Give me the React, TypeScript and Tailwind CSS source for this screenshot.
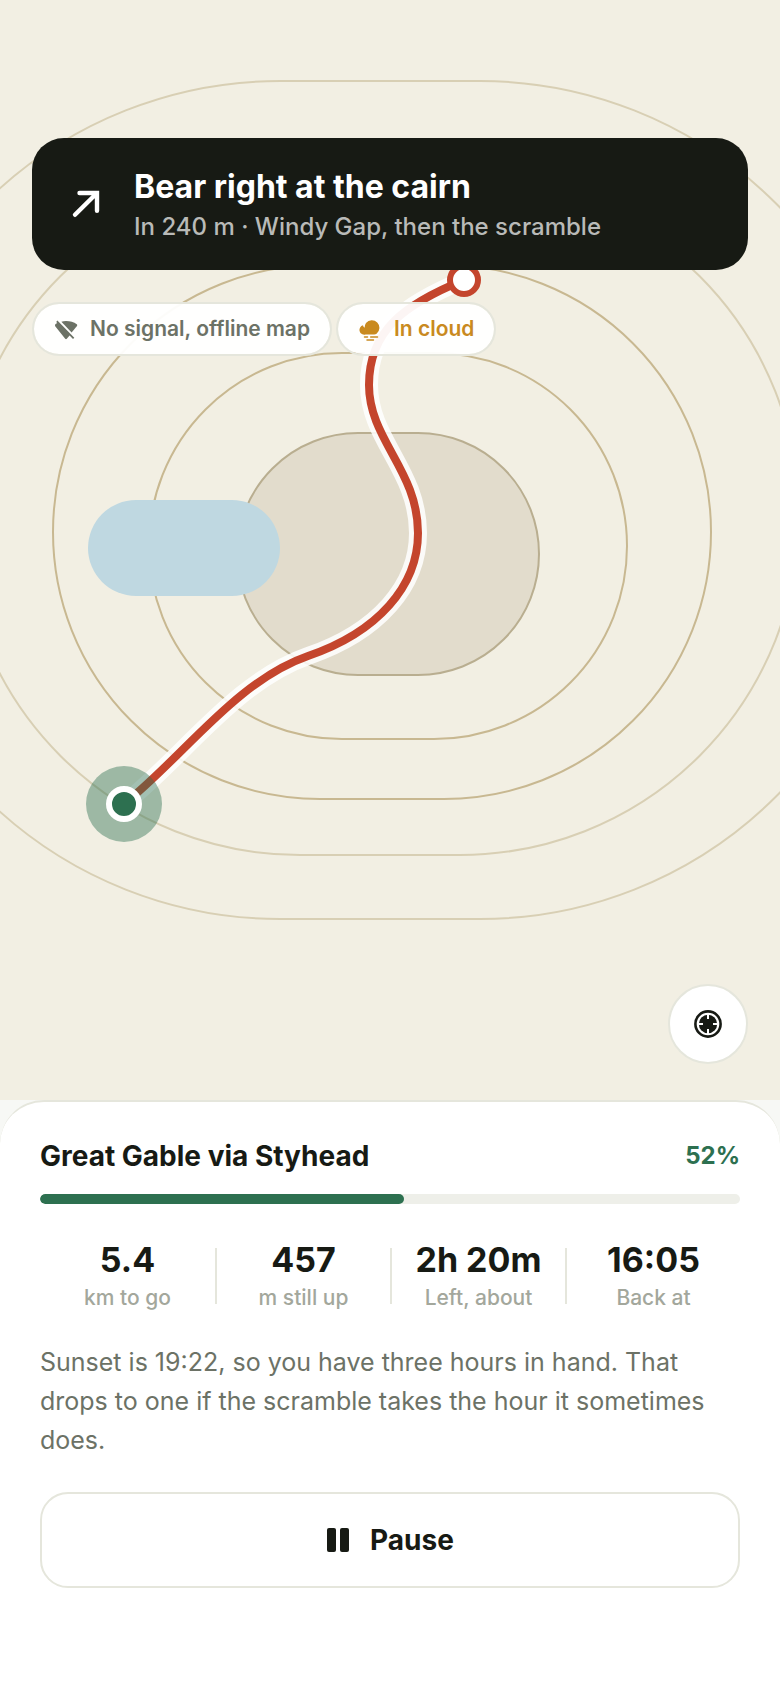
import { useState } from 'react';

type Stat = {
  value: string;
  label: string;
};

const walk = {
  title: 'Great Gable via Styhead',
  progress: 52,
  note: 'Sunset is 19:22, so you have three hours in hand. That drops to one if the scramble takes the hour it sometimes does.',
};

const stats: Stat[] = [
  { value: '5.4', label: 'km to go' },
  { value: '457', label: 'm still up' },
  { value: '2h 20m', label: 'Left, about' },
  { value: '16:05', label: 'Back at' },
];

const contours = [
  { x: -139, y: 81, width: 1038, height: 838, rx: 419, stroke: '#d8cfb4' },
  { x: -39, y: 177, width: 838, height: 678, rx: 339, stroke: '#d8cfb4' },
  { x: 53, y: 265, width: 658, height: 534, rx: 267, stroke: '#c8b891' },
  { x: 149, y: 353, width: 478, height: 386, rx: 193, stroke: '#c8b891' },
];

const route =
  'M124 804C184 756 236 681 308 656C378 632 418 586 418 533C418 470 369 440 369 385C369 330 405 304 464 280';

function TrailMap() {
  return (
    <svg
      className="absolute inset-0 h-full w-full"
      viewBox="0 0 780 1100"
      preserveAspectRatio="xMidYMid slice"
      fill="none"
      role="img"
      aria-label="Map of the route"
    >
      {contours.map((contour) => (
        <rect key={contour.x} strokeWidth="2" {...contour} />
      ))}
      <rect
        x="237"
        y="433"
        width="302"
        height="242"
        rx="121"
        fill="#e2dccc"
        stroke="#b9ae90"
        strokeWidth="2"
      />
      <rect x="88" y="500" width="192" height="96" rx="48" fill="#bfd8e1" />
      <path d={route} stroke="#fff" strokeOpacity="0.85" strokeWidth="18" strokeLinecap="round" />
      <path d={route} stroke="#c4452d" strokeWidth="8" strokeLinecap="round" />
      <circle cx="464" cy="280" r="14" fill="#fff" stroke="#c4452d" strokeWidth="6" />
      <circle cx="124" cy="804" r="38" fill="#2d7050" fillOpacity="0.43" />
      <circle cx="124" cy="804" r="15" fill="#2d7050" stroke="#fff" strokeWidth="6" />
    </svg>
  );
}

function BearRightIcon() {
  return (
    <svg className="size-11 shrink-0" viewBox="0 0 44 44" fill="none" aria-hidden="true">
      <path
        d="M11 32.800L32.500 11.500M15.500 11H33V28.800"
        stroke="#fff"
        strokeWidth="4.400"
        strokeLinecap="round"
        strokeLinejoin="miter"
      />
    </svg>
  );
}

function NoSignalIcon() {
  return (
    <svg className="size-6 shrink-0" viewBox="0 0 24 24" fill="currentColor" aria-hidden="true">
      <path d="M3.400 3.600L20.300 20.800L19 22L15.600 18.600L12.800 21.800Q12 22.600 11.200 21.800L1.200 9.200Q.500 8 1.600 7L3.200 6L2.200 4.900Z" />
      <path d="M7.400 4.700Q9.400 4 12 4Q18.200 4 22.800 7.300Q23.600 8 23 9L17.600 15.500Z" />
    </svg>
  );
}

function CloudIcon() {
  return (
    <svg className="size-6 shrink-0" viewBox="0 0 24 24" fill="currentColor" aria-hidden="true">
      <path d="M7.500 17.500A4.600 4.600 0 0 1 5 8.300Q5.200 9.800 6.600 10.800Q6.600 8 8 6A7.600 7.600 0 1 1 18.600 16.800Q17.600 17.500 16.200 17.500Z" />
      <path
        d="M6.500 20H9.500M12.700 20H19.500M9 23H15.500"
        stroke="currentColor"
        strokeWidth="1.500"
        strokeLinecap="round"
      />
    </svg>
  );
}

function CompassIcon() {
  return (
    <svg className="size-7" viewBox="0 0 28 28" fill="none" aria-hidden="true">
      <circle cx="14" cy="14" r="12.600" stroke="#171a14" strokeWidth="2.600" />
      <circle cx="14" cy="14" r="9.200" fill="#171a14" />
      <path
        d="M14 4V9M14 19V24M4 14H9M19 14H24"
        stroke="#fff"
        strokeWidth="2"
      />
    </svg>
  );
}

export default function App() {
  const [paused, setPaused] = useState(false);

  return (
    <main className="flex min-h-screen flex-col bg-[#f7f8f5] font-['Inter',sans-serif] text-[#171a14]">
      <section className="relative flex min-h-[1000px] flex-1 flex-col overflow-hidden bg-[#f2efe3] px-8 pt-[138px] pb-9">
        <TrailMap />

        <div className="relative flex min-h-[132px] items-center gap-[26px] rounded-[32px] bg-[#171a14] px-8">
          <BearRightIcon />
          <div className="pt-0.5">
            <h1 className="text-[32px] leading-10 font-bold text-white">Bear right at the cairn</h1>
            <p className="mt-1 text-2xl leading-8 font-medium text-[#b9bab8]">
              In 240 m · Windy Gap, then the scramble
            </p>
          </div>
        </div>

        <div className="relative mt-8 flex flex-wrap gap-1">
          <span className="flex h-[54px] items-center gap-3 rounded-full border-2 border-[#e5e6dc] bg-white/95 bg-clip-padding px-5 text-[21px] font-semibold text-[#6c7266]">
            <NoSignalIcon />
            No signal, offline map
          </span>
          <span className="flex h-[54px] items-center gap-3 rounded-full border-2 border-[#e5e6dc] bg-white/95 bg-clip-padding px-5 text-[21px] font-semibold text-[#c98a1f]">
            <CloudIcon />
            In cloud
          </span>
        </div>

        <button
          className="relative mt-auto flex size-20 items-center justify-center self-end rounded-full border-2 border-[#e5e6dc] bg-white"
          type="button"
          aria-label="Recentre map"
        >
          <CompassIcon />
        </button>
      </section>

      <section className="rounded-t-[44px] border-t-2 border-[#e5e6dc] bg-white px-10 pt-9 pb-[100px]">
        <div className="flex items-center justify-between">
          <h2 className="text-[28px] leading-9 font-bold">{walk.title}</h2>
          <span className="text-2xl leading-9 font-bold text-[#2d7050]">{walk.progress}%</span>
        </div>
        <div
          className="mt-5 h-2.5 overflow-hidden rounded-full bg-[#eeefe9]"
          role="progressbar"
          aria-label="Walk progress"
          aria-valuenow={walk.progress}
          aria-valuemin={0}
          aria-valuemax={100}
        >
          <div className="h-full rounded-full bg-[#2d7050]" style={{ width: `${walk.progress}%` }} />
        </div>

        <dl className="mt-9 flex items-center">
          {stats.map((stat, index) => (
            <div key={stat.label} className="flex flex-1 items-center">
              {index > 0 && <div className="h-14 w-0.5 bg-[#e5e6dc]" />}
              <div className="flex flex-1 flex-col-reverse text-center">
                <dt className="mt-1 text-[21px] leading-7 font-medium text-[#a3a79c]">
                  {stat.label}
                </dt>
                <dd className="text-[34px] leading-10 font-bold">{stat.value}</dd>
              </div>
            </div>
          ))}
        </dl>

        <p className="mt-[31px] text-[25px] leading-[39px] text-[#6c7266]">{walk.note}</p>

        <button
          className="mt-8 flex h-24 w-full items-center justify-center gap-5 rounded-[28px] border-2 border-[#e5e6dc] text-[28px] font-bold"
          type="button"
          aria-pressed={paused}
          onClick={() => setPaused(!paused)}
        >
          <svg className="h-6 w-6" viewBox="0 0 24 24" fill="currentColor" aria-hidden="true">
            <rect x="1" width="9" height="24" rx="2" />
            <rect x="14" width="9" height="24" rx="2" />
          </svg>
          Pause
        </button>
      </section>
    </main>
  );
}
